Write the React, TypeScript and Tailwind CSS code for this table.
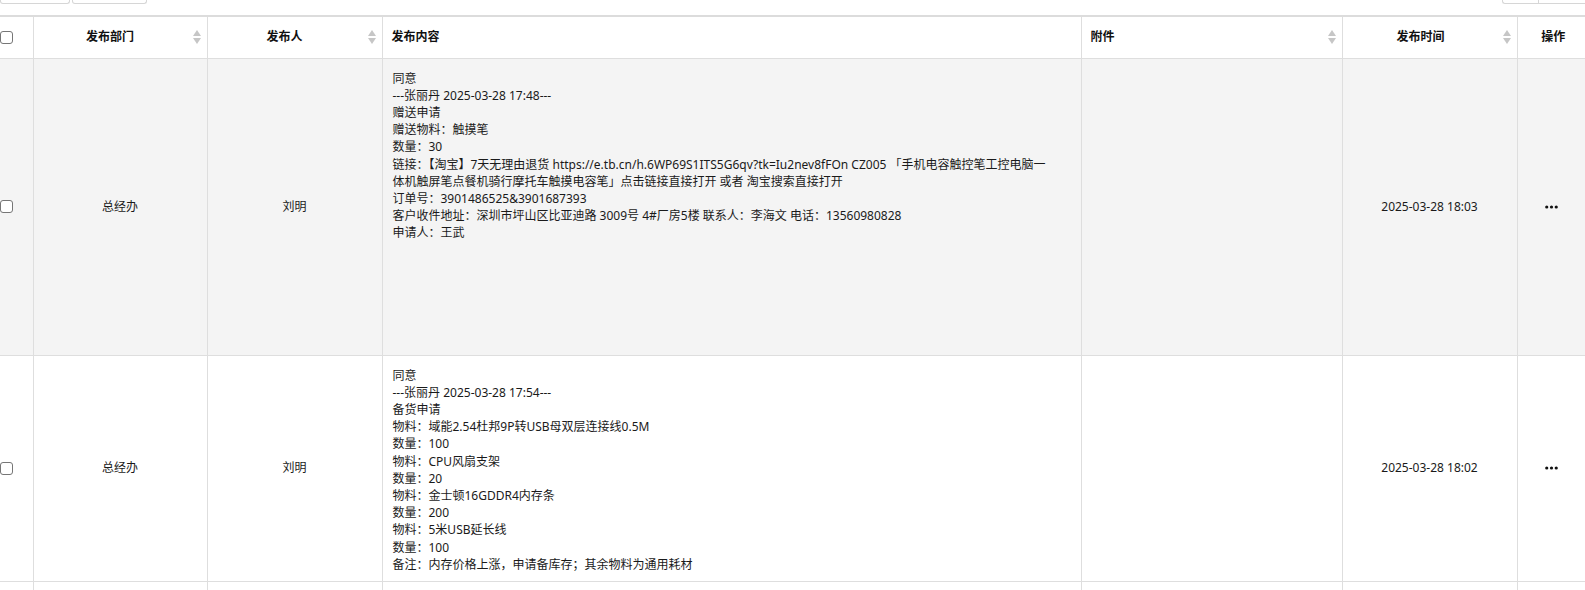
import React from 'react'

const font = { fontFamily: '"Noto Sans", "Noto Sans CJK SC", sans-serif' }

interface Row {
  dept: string
  person: string
  lines: string[]
  time: string
  height: string
  striped: boolean
}

const rows: Row[] = [
  {
    dept: '总经办',
    person: '刘明',
    lines: [
      '同意',
      '---张丽丹 2025-03-28 17:48---',
      '赠送申请',
      '赠送物料：触摸笔',
      '数量：30',
      '链接：【淘宝】7天无理由退货 https://e.tb.cn/h.6WP69S1ITS5G6qv?tk=Iu2nev8fFOn CZ005 「手机电容触控笔工控电脑一',
      '体机触屏笔点餐机骑行摩托车触摸电容笔」点击链接直接打开 或者 淘宝搜索直接打开',
      '订单号：3901486525&3901687393',
      '客户收件地址：深圳市坪山区比亚迪路 3009号 4#厂房5楼 联系人：李海文 电话：13560980828',
      '申请人：王武',
    ],
    time: '2025-03-28 18:03',
    height: 'h-[297px]',
    striped: true,
  },
  {
    dept: '总经办',
    person: '刘明',
    lines: [
      '同意',
      '---张丽丹 2025-03-28 17:54---',
      '备货申请',
      '物料：域能2.54杜邦9P转USB母双层连接线0.5M',
      '数量：100',
      '物料：CPU风扇支架',
      '数量：20',
      '物料：金士顿16GDDR4内存条',
      '数量：200',
      '物料：5米USB延长线',
      '数量：100',
      '备注：内存价格上涨，申请备库存；其余物料为通用耗材',
    ],
    time: '2025-03-28 18:02',
    height: 'h-[226px]',
    striped: false,
  },
]

function SortIcon() {
  return (
    <svg width="8" height="14" viewBox="0 0 8 14" className="shrink-0">
      <path d="M4 0 L8 6 L0 6 Z" fill="#c6c6c6" />
      <path d="M0 8 L8 8 L4 14 Z" fill="#c6c6c6" />
    </svg>
  )
}

function Checkbox() {
  return <div className="w-[13px] h-[13px] border border-[#767676] rounded-[3px] bg-white" />
}

function Dots() {
  return (
    <svg width="13" height="4" viewBox="0 0 13 4" className="mx-auto block">
      <circle cx="1.75" cy="2" r="1.6" fill="#111" />
      <circle cx="6.5" cy="2" r="1.6" fill="#111" />
      <circle cx="11.25" cy="2" r="1.6" fill="#111" />
    </svg>
  )
}

export default function App() {
  const th = 'border-r border-[#dedede] font-bold text-[12px] text-[#111] p-0 h-[42px]'
  const td = 'border-r border-[#dedede] text-[12px] text-[#1a1a1a] p-0 align-middle'

  return (
    <div className="w-[1585px] h-[590px] overflow-hidden bg-white" style={font}>
      {/* toolbar (scrolled out of view) */}
      <div className="h-[15px] flex justify-between">
        <div className="flex gap-[2px]">
          <div className="w-[70px] h-[4px] border-x border-b border-[#d6d6d6] rounded-b-[3px]" />
          <div className="w-[75px] h-[4px] border-x border-b border-[#d6d6d6] rounded-b-[3px]" />
        </div>
        <div className="flex">
          <div className="w-[36px] h-[4px] border-l border-b border-[#d6d6d6] rounded-bl-[3px]" />
          <div className="w-[47px] h-[4px] border-l border-b border-[#d6d6d6]" />
        </div>
      </div>

      <table className="table-fixed border-collapse w-[1585px]">
        <colgroup>
          <col className="w-[33px]" />
          <col className="w-[174px]" />
          <col className="w-[175px]" />
          <col className="w-[699px]" />
          <col className="w-[261px]" />
          <col className="w-[175px]" />
          <col className="w-[68px]" />
        </colgroup>
        <thead>
          <tr className="border-t-2 border-t-[#dcdcdc] border-b border-b-[#dedede] bg-white">
            <th className={th}>
              <div className="flex items-center">
                <Checkbox />
              </div>
            </th>
            <th className={th}>
              <div className="flex items-center pl-[8px] pr-[6px]">
                <span className="flex-1 text-center mr-[14px]">发布部门</span>
                <SortIcon />
              </div>
            </th>
            <th className={th}>
              <div className="flex items-center pl-[8px] pr-[6px]">
                <span className="flex-1 text-center mr-[14px]">发布人</span>
                <SortIcon />
              </div>
            </th>
            <th className={th}>
              <div className="pl-[9px] text-left">发布内容</div>
            </th>
            <th className={th}>
              <div className="flex items-center pl-[9px] pr-[6px]">
                <span className="flex-1 text-left">附件</span>
                <SortIcon />
              </div>
            </th>
            <th className={th}>
              <div className="flex items-center pl-[8px] pr-[6px]">
                <span className="flex-1 text-center mr-[12px]">发布时间</span>
                <SortIcon />
              </div>
            </th>
            <th className="font-bold text-[12px] text-[#111] p-0 h-[42px] text-center pl-[4px]">操作</th>
          </tr>
        </thead>
        <tbody>
          {rows.map((row, i) => (
            <tr
              key={i}
              className={`border-b border-[#dedede] ${row.striped ? 'bg-[#f4f4f4]' : 'bg-white'}`}
            >
              <td className={`${td} ${row.height}`}>
                <Checkbox />
              </td>
              <td className={`${td} text-center`}>{row.dept}</td>
              <td className={`${td} text-center`}>{row.person}</td>
              <td className={`${td} align-top pl-[10px] pr-[8px] pt-[11px]`}>
                {row.lines.map((line, j) => (
                  <div key={j} className="leading-[17.2px] whitespace-nowrap">
                    {line}
                  </div>
                ))}
              </td>
              <td className={td}></td>
              <td className={`${td} text-center`}>{row.time}</td>
              <td className="p-0 align-middle">
                <Dots />
              </td>
            </tr>
          ))}
          <tr className="bg-white">
            <td className={`${td} h-[40px]`}></td>
            <td className={td}></td>
            <td className={td}></td>
            <td className={td}></td>
            <td className={td}></td>
            <td className={td}></td>
            <td className="p-0"></td>
          </tr>
        </tbody>
      </table>
    </div>
  )
}
